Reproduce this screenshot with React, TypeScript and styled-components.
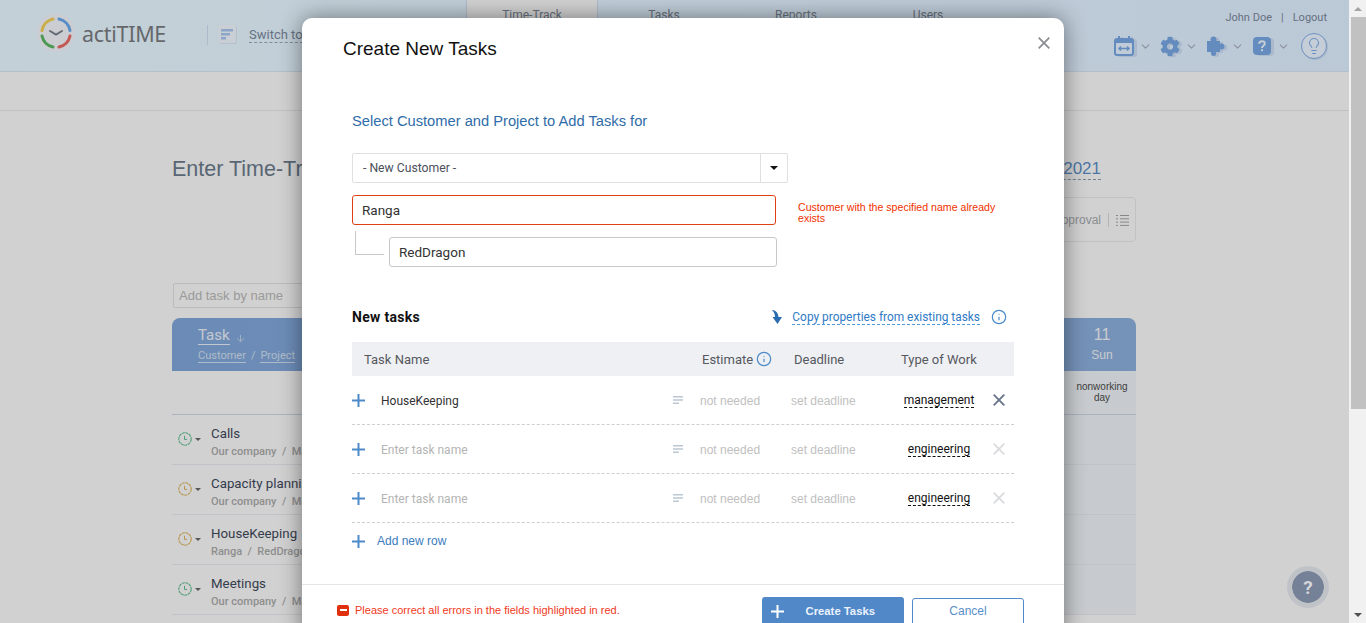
import styled, { createGlobalStyle } from 'styled-components';
import { FaCog } from 'react-icons/fa';
import { ArrowDown, ChevronDown, Info, Lightbulb } from 'lucide-react';

const GlobalStyle = createGlobalStyle`
	html, body {
		margin: 0;
		height: 100%;
		overflow: hidden;
		background: #fff;
		font-family: 'Liberation Sans', Arial, sans-serif;
	}
	* {
		box-sizing: border-box;
	}
`;

const Screen = styled.div`
	display: flex;
	width: 1366px;
	height: 623px;
	overflow: hidden;
`;

const Viewport = styled.div`
	position: relative;
	flex: 1;
	height: 100%;
	overflow: hidden;
`;

const ScrollBar = styled.div`
	width: 17px;
	height: 100%;
	background: #f1f1f1;
	display: flex;
	flex-direction: column;
	align-items: center;
`;

const ScrollArrow = styled.div<{ $down?: boolean }>`
	height: 17px;
	flex: none;
	width: 100%;
	display: flex;
	align-items: center;
	justify-content: center;
	margin-top: ${(p) => (p.$down ? 'auto' : '0')};
	&::after {
		content: '';
		border-left: 4px solid transparent;
		border-right: 4px solid transparent;
		${(p) => (p.$down ? 'border-top: 4px solid #505050;' : 'border-bottom: 4px solid #a3a3a3;')}
	}
`;

const ScrollThumb = styled.div`
	width: 15px;
	height: 392px;
	margin-left: 2px;
	background: #c1c1c1;
`;

/* page behind the dialog */
const Header = styled.header`
	height: 72px;
	display: flex;
	background: linear-gradient(90deg, #eefcff, #e4f3ff);
	border-bottom: 1px solid #dbe9f6;
`;

const Brand = styled.div`
	width: 466px;
	flex: none;
	display: flex;
	align-items: center;
	padding: 0 0 5px 37px;
`;

const BrandName = styled.span`
	margin-left: 7px;
	font-family: 'Noto Sans', sans-serif;
	font-size: 21.5px;
	color: #7b7b7b;
	letter-spacing: -0.3px;
`;

const BrandDivider = styled.div`
	width: 1px;
	height: 20px;
	margin: 4px 10px 0 41px;
	background: #d3e0ee;
`;

const SwitchIcon = styled.div`
	width: 18px;
	height: 18px;
	margin-top: 2px;
	border-radius: 2px;
	background: #f6fafd;
	box-shadow: 1px 1px 0 #dce8f3;
	display: flex;
	align-items: center;
	justify-content: center;
`;

const SwitchLabel = styled.span`
	margin: 3px 0 0 13px;
	font-family: Roboto, sans-serif;
	font-size: 13px;
	color: #7d8997;
	border-bottom: 1px dashed #9aa8b5;
`;

const Nav = styled.nav`
	display: flex;
`;

const NavTab = styled.div<{ $active?: boolean }>`
	width: 132px;
	padding-top: 8px;
	text-align: center;
	font-family: Roboto, sans-serif;
	font-size: 12px;
	line-height: 15px;
	color: #7f8790;
	${(p) =>
		p.$active &&
		`
		background: #fffdf8;
		border-left: 1px solid #d5e2ef;
		border-right: 1px solid #d5e2ef;
		height: 72px;
	`}
`;

const UserArea = styled.div`
	margin-left: auto;
	padding: 11px 22px 0 0;
	display: flex;
	flex-direction: column;
	align-items: flex-end;
`;

const UserLinks = styled.div`
	display: flex;
	align-items: center;
	gap: 9px;
	font-family: Roboto, sans-serif;
	font-size: 11px;
	line-height: 13px;
	color: #7d8794;
`;

const UserIcons = styled.div`
	margin-top: 9px;
	display: flex;
	align-items: center;
`;

const MenuIcon = styled.div`
	width: 20px;
	height: 22px;
	display: flex;
	align-items: center;
	justify-content: center;
	color: #7aa8e0;
	filter: drop-shadow(3px 1px 0 #cfdff0);
`;

const MenuChevron = styled(ChevronDown)`
	margin: 0 8px 0 5px;
	color: #a8b0b8;
`;

const BulbRing = styled.div`
	width: 26px;
	height: 26px;
	margin-left: 3px;
	border-radius: 50%;
	border: 1.5px solid #86b0e4;
	background: #f0f8ff;
	display: flex;
	align-items: center;
	justify-content: center;
	color: #86b0e4;
	box-shadow: 1px 1px 0 #cfdff0;
`;

const SubBar = styled.div`
	height: 39px;
	border-bottom: 1px solid #ebebeb;
`;

const Content = styled.main`
	width: 964px;
	margin-left: 172px;
`;

const TitleRow = styled.div`
	display: flex;
	justify-content: space-between;
	align-items: center;
	padding: 46px 35px 0 0;
`;

const PageTitle = styled.h1`
	margin: 0;
	font-size: 21.5px;
	font-weight: 400;
	line-height: 24px;
	color: #6d7c8e;
`;

const DateRange = styled.span`
	font-size: 17px;
	line-height: 20px;
	color: #5f91cb;
	border-bottom: 1px dashed #8ea0b4;
`;

const ViewBox = styled.div`
	margin: 16px 0 0 auto;
	width: 300px;
	height: 45px;
	padding: 1px 6px 0 0;
	display: flex;
	align-items: center;
	justify-content: flex-end;
	border: 1px solid #ececec;
	border-radius: 4px;
	font-size: 12px;
	color: #a9adb2;
`;

const ViewDivider = styled.span`
	width: 1px;
	height: 14px;
	margin: 0 7px;
	background: #dcdcdc;
`;

const AddTaskInput = styled.div`
	margin: 41px 0 0 1px;
	width: 200px;
	height: 25px;
	padding-left: 5px;
	border: 1px solid #e4e4e4;
	border-radius: 2px;
	font-size: 13px;
	line-height: 23px;
	color: #bcbcbc;
`;

const TableHead = styled.div`
	margin-top: 10px;
	height: 53px;
	display: flex;
	justify-content: space-between;
	border-radius: 8px 8px 0 0;
	background: linear-gradient(90deg, #83aadf, #8fb2e0);
	color: #fff;
`;

const TaskHeadCell = styled.div`
	padding: 8px 0 0 26px;
`;

const TaskHeadTop = styled.div`
	display: flex;
	align-items: flex-end;
	height: 19px;
`;

const TaskHeadTitle = styled.span`
	font-family: Roboto, sans-serif;
	font-size: 15px;
	line-height: 18px;
	color: #eef4fc;
	border-bottom: 1px solid #eef4fc;
`;

const SortArrow = styled(ArrowDown)`
	margin: 0 0 1px 5px;
	color: #c8daf2;
`;

const TaskHeadSub = styled.div`
	margin-top: 4px;
	display: flex;
	gap: 5px;
	font-family: Roboto, sans-serif;
	font-size: 11px;
	line-height: 13px;
	color: #d5e3f5;
`;

const Underlined = styled.span`
	border-bottom: 1px solid #d5e3f5;
`;

const DayHeadCell = styled.div`
	width: 68px;
	padding-top: 7px;
	text-align: center;
	color: #f4f8fd;
`;

const DayNumber = styled.div`
	font-size: 16px;
	line-height: 20px;
`;

const DayName = styled.div`
	margin-top: 3px;
	font-size: 12px;
	line-height: 14px;
`;

const SummaryRow = styled.div`
	height: 44px;
	display: flex;
	justify-content: flex-end;
	border-bottom: 1px solid #cfdbe8;
`;

const DayNote = styled.div`
	width: 72px;
	padding: 10px 2px 0 6px;
	text-align: center;
	font-size: 10px;
	line-height: 11px;
	color: #4c4c4c;
	background: #f3f8fc;
`;

const TaskRow = styled.div`
	height: 50px;
	display: flex;
	justify-content: space-between;
	border-bottom: 1px solid #eaeef3;
`;

const TaskStatus = styled.div`
	width: 39px;
	padding: 17px 0 0 6px;
	display: flex;
	align-items: flex-start;
	gap: 3px;
	flex: none;
`;

const StatusCaret = styled.span`
	margin-top: 6px;
	border-left: 3px solid transparent;
	border-right: 3px solid transparent;
	border-top: 3px solid #6a6a6a;
`;

const TaskMain = styled.div`
	flex: 1;
	padding-top: 10px;
	white-space: nowrap;
	overflow: hidden;
`;

const TaskName = styled.div`
	font-family: Roboto, sans-serif;
	font-size: 13.3px;
	line-height: 17px;
	color: #3f4a5c;
`;

const TaskPath = styled.div`
	margin-top: 3px;
	font-family: Roboto, sans-serif;
	font-size: 11px;
	line-height: 14px;
	font-weight: 500;
	white-space: pre;
	color: #adadad;
`;

const DayCell = styled.div`
	width: 72px;
	background: #f3f8fc;
`;

const Dim = styled.div`
	position: absolute;
	inset: 0;
	background: linear-gradient(180deg, rgba(0, 10, 35, 0.18) 71px, rgba(0, 0, 0, 0.18) 71px);
`;

const HelpBubble = styled.div`
	position: absolute;
	left: 1287px;
	top: 566px;
	width: 42px;
	height: 42px;
	border-radius: 50%;
	border: 5px solid #bfc3c8;
	background: #748196;
	background-clip: padding-box;
	display: flex;
	align-items: center;
	justify-content: center;
	font-family: Roboto, sans-serif;
	font-size: 19px;
	font-weight: 700;
	color: #d4d6da;
`;

/* dialog */
const Modal = styled.section`
	position: absolute;
	left: 302px;
	top: 18px;
	width: 762px;
	border-radius: 10px;
	background: #fff;
	box-shadow: 0 0 22px rgba(0, 0, 0, 0.45);
`;

const CloseButton = styled.div`
	position: absolute;
	top: 19px;
	right: 14px;
	width: 12px;
	height: 12px;
	display: flex;
	color: #8b8f94;
`;

const ModalTitle = styled.h2`
	margin: 0;
	padding: 19px 0 0 41px;
	font-size: 19px;
	font-weight: 400;
	line-height: 24px;
	color: #111;
`;

const ModalBody = styled.div`
	padding: 0 50px;
`;

const SectionTitle = styled.h3`
	margin: 50px 0 0;
	font-size: 14.7px;
	font-weight: 400;
	line-height: 20px;
	color: #2f6ca8;
`;

const SelectBox = styled.div`
	margin-top: 22px;
	width: 436px;
	height: 30px;
	display: flex;
	border: 1px solid #e0e0e0;
	border-radius: 2px;
`;

const SelectValue = styled.div`
	flex: 1;
	padding-left: 10px;
	font-family: Roboto, sans-serif;
	font-size: 12.2px;
	line-height: 29px;
	color: #4a4f5a;
`;

const SelectArrow = styled.div`
	width: 27px;
	display: flex;
	align-items: center;
	justify-content: center;
	border-left: 1px solid #e0e0e0;
	&::after {
		content: '';
		border-left: 4px solid transparent;
		border-right: 4px solid transparent;
		border-top: 4px solid #111;
	}
`;

const FieldRow = styled.div`
	margin-top: 12px;
	display: flex;
	align-items: flex-start;
`;

const TextField = styled.div<{ $error?: boolean; $wide?: number }>`
	width: ${(p) => p.$wide ?? 424}px;
	height: 30px;
	padding-left: 9px;
	border: 1px solid ${(p) => (p.$error ? '#e0400f' : '#c8c8c8')};
	border-radius: 3px;
	font-family: Roboto, sans-serif;
	font-size: 13.5px;
	line-height: 28px;
	color: #333;
`;

const FieldError = styled.div`
	width: 210px;
	margin: 7px 0 0 22px;
	font-size: 10.6px;
	line-height: 11px;
	color: #f03000;
`;

const Connector = styled.div`
	width: 29px;
	height: 24px;
	margin: -6px 5px 0 3px;
	flex: none;
	border-left: 1px solid #c8c8c8;
	border-bottom: 1px solid #c8c8c8;
`;

const TasksHead = styled.div`
	margin-top: 40px;
	height: 20px;
	display: flex;
	align-items: center;
`;

const TasksTitle = styled.div`
	font-family: Roboto, sans-serif;
	font-size: 14px;
	font-weight: 700;
	letter-spacing: 0.3px;
	color: #111;
`;

const CopyLink = styled.span`
	margin-left: 9px;
	font-family: Roboto, sans-serif;
	font-size: 11.9px;
	line-height: 14px;
	color: #2f7ac6;
	border-bottom: 1px dashed #4f9be0;
`;

const CopyArrow = styled.svg`
	margin-left: auto;
	flex: none;
`;

const InfoIcon = styled(Info)`
	color: #4a8ac8;
	flex: none;
`;

const CopyInfo = styled(InfoIcon)`
	margin: 0 7px 0 11px;
`;

const GridHead = styled.div`
	margin-top: 15px;
	height: 34px;
	display: grid;
	grid-template-columns: 350px 92px 107px 113px;
	align-items: center;
	background: #eff0f4;
	font-family: Roboto, sans-serif;
	font-size: 13px;
	color: #55585e;
`;

const GridHeadName = styled.div`
	padding-left: 12px;
`;

const EstimateHead = styled.div`
	display: flex;
	align-items: center;
	gap: 3px;
`;

const Row = styled.div`
	height: 49px;
	display: grid;
	grid-template-columns: 29px 292px 27px 91px 113px 89px 21px;
	align-items: center;
	border-bottom: 1px dashed #cfcfcf;
`;

const RowName = styled.div<{ $empty?: boolean }>`
	padding-top: 2px;
	font-family: Roboto, sans-serif;
	font-size: 12px;
	color: ${(p) => (p.$empty ? '#b4b4b4' : '#333')};
`;

const RowHint = styled.div`
	padding-top: 2px;
	font-size: 12px;
	color: #c0c0c0;
`;

const WorkType = styled.div`
	width: 70px;
	display: flex;
	justify-content: center;
`;

const WorkTypeLabel = styled.span`
	font-family: Roboto, sans-serif;
	font-size: 12px;
	line-height: 14px;
	color: #111;
	border-bottom: 1px dashed #111;
`;

const RemoveButton = styled.div<{ $active?: boolean }>`
	display: flex;
	color: ${(p) => (p.$active ? '#67738a' : '#d9dbde')};
`;

const AddRow = styled.div`
	height: 36px;
	display: flex;
	align-items: center;
	gap: 12px;
	font-size: 12px;
	color: #3c7cc0;
`;

const Footer = styled.footer`
	margin-top: 25px;
	padding: 12px 40px 8px 35px;
	display: flex;
	align-items: flex-start;
	border-top: 1px solid #e6e6e6;
`;

const FooterError = styled.div`
	margin-top: 5px;
	display: flex;
	align-items: center;
	gap: 6px;
	font-size: 11px;
	line-height: 16px;
	color: #f03a22;
`;

const ErrorBadge = styled.span`
	width: 12px;
	height: 11px;
	border-radius: 2px;
	background: #e0300e;
	display: flex;
	align-items: center;
	justify-content: center;
	&::after {
		content: '';
		width: 7px;
		height: 2px;
		background: #fff;
	}
`;

const CreateButton = styled.div`
	margin-left: auto;
	width: 142px;
	height: 28px;
	padding: 0 29px 0 9px;
	display: flex;
	align-items: center;
	justify-content: space-between;
	border-radius: 3px;
	background: #5088c8;
	font-size: 11.3px;
	font-weight: 700;
	color: #eaf2fb;
`;

const CancelButton = styled.div`
	margin: 1px 0 0 8px;
	width: 112px;
	height: 33px;
	border: 1px solid #5088c8;
	border-radius: 3px;
	text-align: center;
	font-size: 12px;
	line-height: 24px;
	color: #5a8fc8;
`;

const PlusIcon = ({ color = '#4f8ac8' }: { color?: string }) => (
	<svg width="13" height="13" viewBox="0 0 13 13">
		<path d="M6.5 0v13M0 6.5h13" stroke={color} strokeWidth="2" fill="none" />
	</svg>
);

const CrossIcon = ({ size = 12 }: { size?: number }) => (
	<svg width={size} height={size} viewBox="0 0 12 12">
		<path d="M.7.7l10.6 10.6M11.3.7L.7 11.3" stroke="currentColor" strokeWidth="1.8" fill="none" />
	</svg>
);

const NotesIcon = ({ color = '#bcc8d4' }: { color?: string }) => (
	<svg width="10" height="8" viewBox="0 0 10 8">
		<path d="M0 0h10v1.6H0zM0 3.2h10v1.6H0zM0 6.4h6V8H0z" fill={color} />
	</svg>
);

const Logo = () => (
	<svg width="38" height="38" viewBox="0 0 38 38">
		<circle cx="19" cy="19" r="19" fill="#f8f8f8" />
		<g fill="none" strokeWidth="3" strokeLinecap="round">
			<path d="M5 16.5A14.2 14.2 0 0 1 16 5" stroke="#f7d24f" />
			<path d="M22 5A14.2 14.2 0 0 1 33 16.5" stroke="#6ba9ea" />
			<path d="M33 22A14.2 14.2 0 0 1 22 33" stroke="#ec6a5e" />
			<path d="M16 33A14.2 14.2 0 0 1 5 22" stroke="#5cb85c" />
			<path d="M13 17l6 3.5 6-3.5" stroke="#7a7f86" strokeWidth="2" />
		</g>
	</svg>
);

const ClockIcon = ({ color }: { color: string }) => (
	<svg width="14" height="14" viewBox="0 0 14 14">
		<circle cx="7" cy="7" r="6.2" fill="none" stroke={color} strokeWidth="1.1" strokeDasharray="3 .6" />
		<path d="M6.5 3.8v3.6h2.6" fill="none" stroke={color} strokeWidth="1" />
	</svg>
);

const tasks = [
	{ name: 'Calls', path: 'Our company  /  Management', color: '#5fbf8e' },
	{ name: 'Capacity planning', path: 'Our company  /  Management', color: '#e0b45c' },
	{ name: 'HouseKeeping', path: 'Ranga  /  RedDragon', color: '#e0b45c' },
	{ name: 'Meetings', path: 'Our company  /  Management', color: '#5fbf8e' },
];

const rows = [
	{ name: 'HouseKeeping', type: 'management', filled: true },
	{ name: 'Enter task name', type: 'engineering', filled: false },
	{ name: 'Enter task name', type: 'engineering', filled: false },
];

const App = () => {
	return (
		<Screen>
			<GlobalStyle />
			<Viewport>
				<Header>
					<Brand>
						<Logo />
						<BrandName>actiTIME</BrandName>
						<BrandDivider />
						<SwitchIcon>
							<svg width="12" height="11" viewBox="0 0 12 11">
								<path d="M0 0h12v2.4H0zM0 4h9v2.4H0zM0 8h5v2.4H0z" fill="#a9c8ec" />
							</svg>
						</SwitchIcon>
						<SwitchLabel>Switch to</SwitchLabel>
					</Brand>
					<Nav>
						<NavTab $active>Time-Track</NavTab>
						<NavTab>Tasks</NavTab>
						<NavTab>Reports</NavTab>
						<NavTab>Users</NavTab>
					</Nav>
					<UserArea>
						<UserLinks>
							<span>John Doe</span>
							<span>|</span>
							<span>Logout</span>
						</UserLinks>
						<UserIcons>
							<MenuIcon>
								<svg width="20" height="20" viewBox="0 0 20 20">
									<path
										d="M4 0h2v2h8V0h2v2h1a3 3 0 0 1 3 3v12a3 3 0 0 1-3 3H3a3 3 0 0 1-3-3V5a3 3 0 0 1 3-3h1z"
										fill="currentColor"
									/>
									<rect x="2" y="7" width="16" height="11" rx="1" fill="#eaf6ff" />
									<path d="M5 12.5h10M7 10.5l-2 2 2 2M13 10.5l2 2-2 2" stroke="currentColor" strokeWidth="1.5" fill="none" />
								</svg>
							</MenuIcon>
							<MenuChevron size={13} strokeWidth={2} />
							<MenuIcon>
								<FaCog size={21} />
							</MenuIcon>
							<MenuChevron size={13} strokeWidth={2} />
							<MenuIcon>
								<svg width="18" height="20" viewBox="0 0 18 20" fill="currentColor">
									<rect x="0" y="5" width="13" height="11" />
									<circle cx="6.500" cy="3.500" r="3" />
									<circle cx="14.500" cy="10.500" r="3" />
									<circle cx="6.500" cy="17.500" r="2.500" />
								</svg>
							</MenuIcon>
							<MenuChevron size={13} strokeWidth={2} />
							<MenuIcon>
								<svg width="18" height="18" viewBox="0 0 18 18">
									<rect width="18" height="18" rx="4" fill="currentColor" />
									<path
										d="M6.2 6.8C6.2 5.2 7.4 4.2 9 4.2s2.8 1 2.8 2.4c0 2.2-2.8 2.2-2.8 4.4"
										stroke="#f2f8ff"
										strokeWidth="2"
										fill="none"
									/>
									<rect x="8" y="12.2" width="2" height="2" fill="#f2f8ff" />
								</svg>
							</MenuIcon>
							<MenuChevron size={13} strokeWidth={2} />
							<BulbRing>
								<Lightbulb size={18} strokeWidth={1.5} />
							</BulbRing>
						</UserIcons>
					</UserArea>
				</Header>
				<SubBar />
				<Content>
					<TitleRow>
						<PageTitle>Enter Time-Track</PageTitle>
						<DateRange>July 5 - July 11, 2021</DateRange>
					</TitleRow>
					<ViewBox>
						<span>Approval</span>
						<ViewDivider />
						<svg width="13" height="11" viewBox="0 0 13 11">
							<path
								d="M0 .5h2M4 .5h9M0 3.8h2M4 3.8h9M0 7.1h2M4 7.1h9M0 10.4h2M4 10.4h9"
								stroke="#a5a5a5"
								strokeWidth="1"
								fill="none"
							/>
						</svg>
					</ViewBox>
					<AddTaskInput>Add task by name</AddTaskInput>
					<TableHead>
						<TaskHeadCell>
							<TaskHeadTop>
								<TaskHeadTitle>Task</TaskHeadTitle>
								<SortArrow size={11} strokeWidth={2} />
							</TaskHeadTop>
							<TaskHeadSub>
								<Underlined>Customer</Underlined>
								<span>/</span>
								<Underlined>Project</Underlined>
							</TaskHeadSub>
						</TaskHeadCell>
						<DayHeadCell>
							<DayNumber>11</DayNumber>
							<DayName>Sun</DayName>
						</DayHeadCell>
					</TableHead>
					<SummaryRow>
						<DayNote>nonworking day</DayNote>
					</SummaryRow>
					{tasks.map((task) => (
						<TaskRow key={task.name}>
							<TaskStatus>
								<ClockIcon color={task.color} />
								<StatusCaret />
							</TaskStatus>
							<TaskMain>
								<TaskName>{task.name}</TaskName>
								<TaskPath>{task.path}</TaskPath>
							</TaskMain>
							<DayCell />
						</TaskRow>
					))}
				</Content>
				<Dim />
				<HelpBubble>?</HelpBubble>
				<Modal>
					<CloseButton>
						<CrossIcon />
					</CloseButton>
					<ModalTitle>Create New Tasks</ModalTitle>
					<ModalBody>
						<SectionTitle>Select Customer and Project to Add Tasks for</SectionTitle>
						<SelectBox>
							<SelectValue>- New Customer -</SelectValue>
							<SelectArrow />
						</SelectBox>
						<FieldRow>
							<TextField $error>Ranga</TextField>
							<FieldError>Customer with the specified name already exists</FieldError>
						</FieldRow>
						<FieldRow>
							<Connector />
							<TextField $wide={388}>RedDragon</TextField>
						</FieldRow>
						<TasksHead>
							<TasksTitle>New tasks</TasksTitle>
							<CopyArrow width="12" height="14" viewBox="0 0 12 14">
								<path d="M1 0C4 0 7 2 7.500 7H11L6.500 14 1.500 7H4C4 4 3 2 1 0z" fill="#2a6cb0" />
							</CopyArrow>
							<CopyLink>Copy properties from existing tasks</CopyLink>
							<CopyInfo size={16} strokeWidth={1.8} />
						</TasksHead>
						<GridHead>
							<GridHeadName>Task Name</GridHeadName>
							<EstimateHead>
								Estimate
								<InfoIcon size={16} strokeWidth={1.8} />
							</EstimateHead>
							<div>Deadline</div>
							<div>Type of Work</div>
						</GridHead>
						{rows.map((row, i) => (
							<Row key={i}>
								<PlusIcon />
								<RowName $empty={!row.filled}>{row.name}</RowName>
								<NotesIcon />
								<RowHint>not needed</RowHint>
								<RowHint>set deadline</RowHint>
								<WorkType>
									<WorkTypeLabel>{row.type}</WorkTypeLabel>
								</WorkType>
								<RemoveButton $active={row.filled}>
									<CrossIcon />
								</RemoveButton>
							</Row>
						))}
						<AddRow>
							<PlusIcon />
							<span>Add new row</span>
						</AddRow>
					</ModalBody>
					<Footer>
						<FooterError>
							<ErrorBadge />
							<span>Please correct all errors in the fields highlighted in red.</span>
						</FooterError>
						<CreateButton>
							<PlusIcon color="#fff" />
							<span>Create Tasks</span>
						</CreateButton>
						<CancelButton>Cancel</CancelButton>
					</Footer>
				</Modal>
			</Viewport>
			<ScrollBar>
				<ScrollArrow />
				<ScrollThumb />
				<ScrollArrow $down />
			</ScrollBar>
		</Screen>
	);
};

export default App;
